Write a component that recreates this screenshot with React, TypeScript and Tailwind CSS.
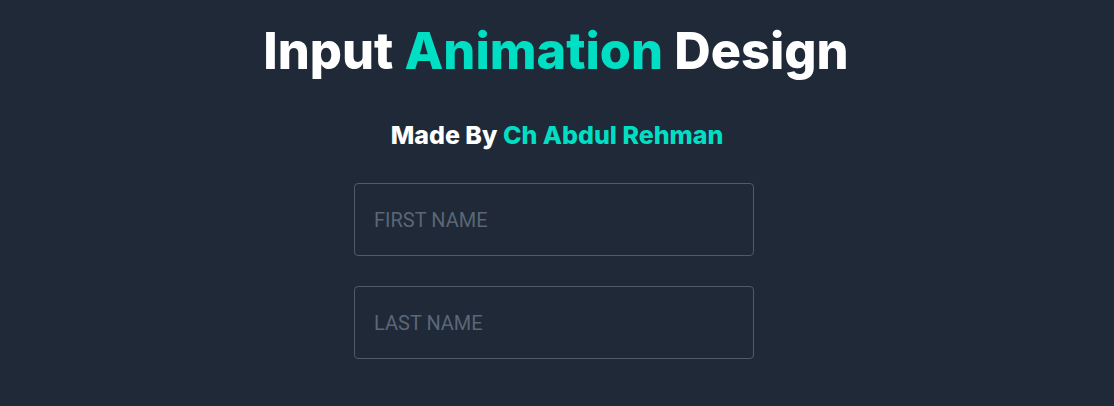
import React from "react";

const Field = ({ label }: { label: string }) => {
  const [value, setValue] = React.useState("");
  return (
    <input
      className="w-[400px] h-[73px] px-[19px] rounded-[4px] border border-[#4f5a6a] bg-transparent outline-none text-[20px] text-white placeholder:text-[#5b6676] font-['Roboto',sans-serif]"
      type="text"
      placeholder={label}
      value={value}
      onChange={(e) => setValue(e.target.value)}
    />
  );
};

const App = () => {
  return (
    <div className="w-full min-h-[406px] bg-[#1f2937] flex flex-col items-center font-['Inter',sans-serif]">
      <h1 className="mt-[21px] mr-[2px] text-[50.5px] leading-[60px] font-extrabold text-white">
        Input <span className="text-[#00dfc4]">Animation</span> Design
      </h1>
      <h3 className="mt-[39px] text-[25px] leading-[30px] font-extrabold text-white">
        Made By <span className="text-[#00dfc4]">Ch Abdul Rehman</span>
      </h3>
      <form className="mt-[33px] mr-[6px] flex flex-col gap-[30px]">
        <Field label="FIRST NAME" />
        <Field label="LAST NAME" />
      </form>
    </div>
  );
};

export default App;
